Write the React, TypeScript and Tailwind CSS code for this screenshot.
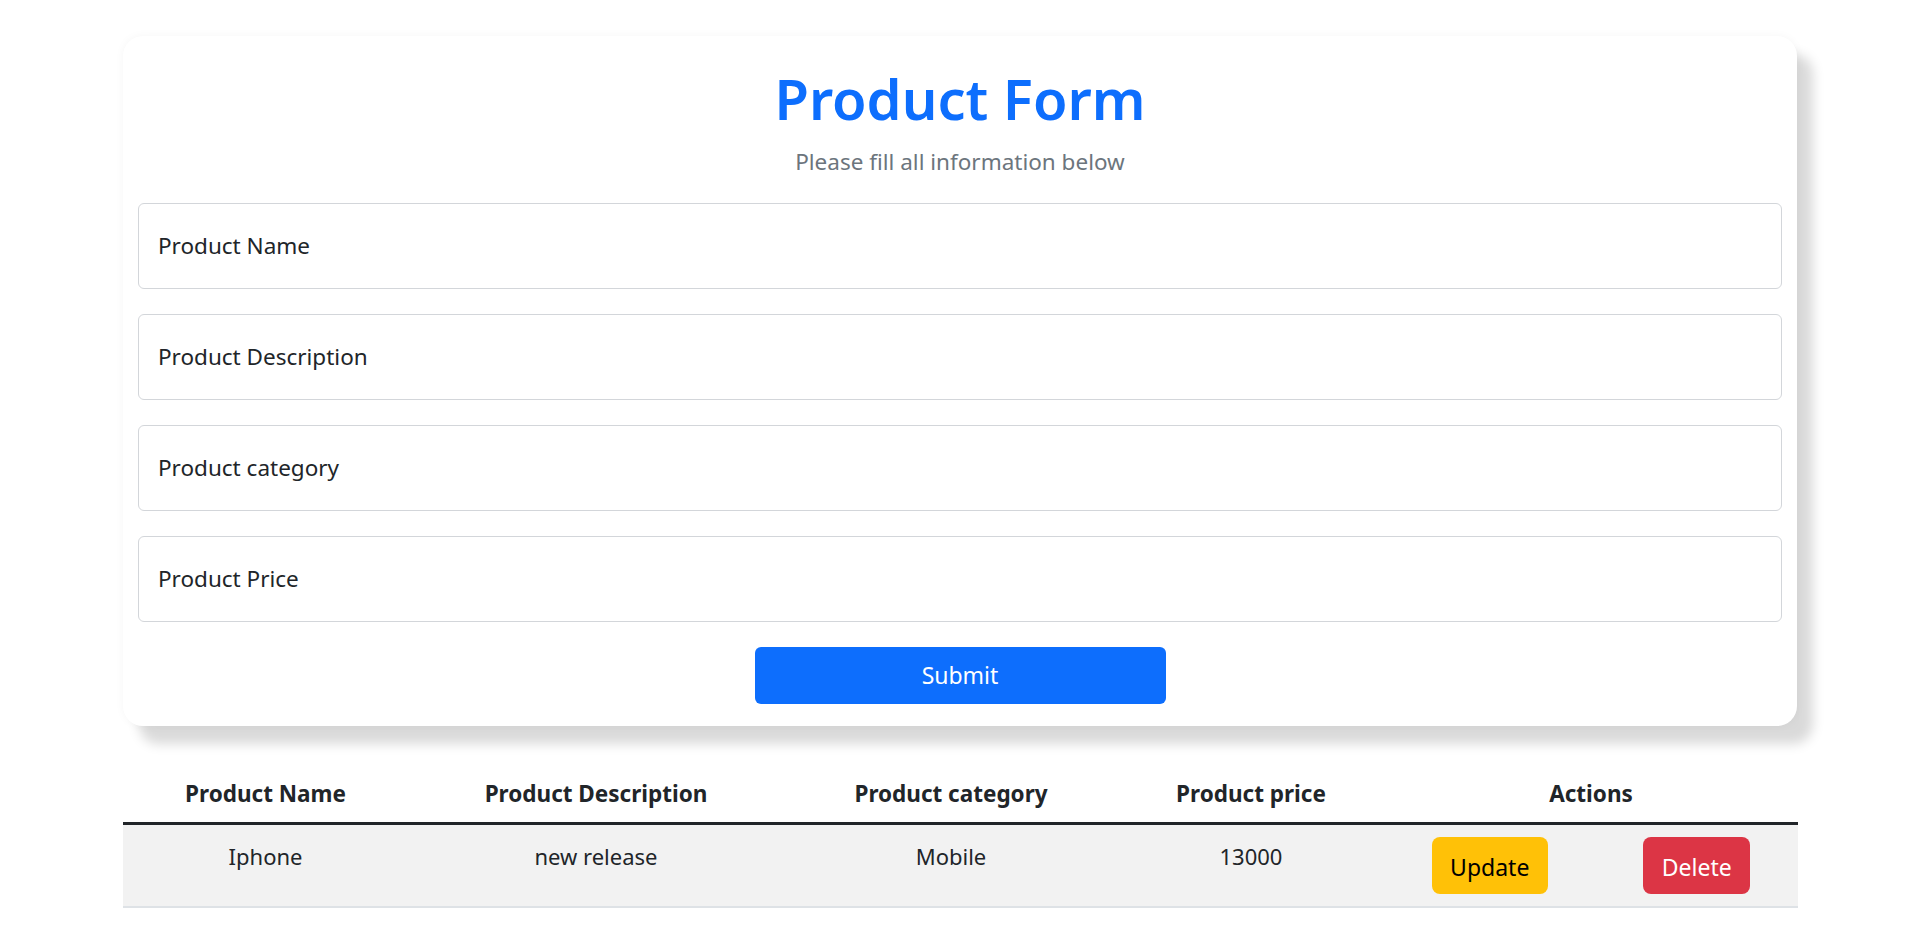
import React from "react";

const fields = [
  "Product Name",
  "Product Description",
  "Product category",
  "Product Price",
];

const products = [
  {
    name: "Iphone",
    description: "new release",
    category: "Mobile",
    price: 13000,
  },
];

function App() {
  return (
    <div className="min-h-screen bg-white font-['Noto_Sans','Liberation_Sans',sans-serif] text-[#212529]">
      <div className="mx-auto w-[1674px] pt-[36px]">
        {/* Form card */}
        <form
          onSubmit={(e) => e.preventDefault()}
          className="flex flex-col items-center rounded-[20px] bg-white px-[15px] pt-[24px] pb-[22px] shadow-[16px_18px_12px_rgba(0,0,0,0.15),0_0_10px_rgba(0,0,0,0.04)]"
        >
          <h1 className="text-[56px] leading-[77px] font-semibold text-[#0d6efd]">
            Product Form
          </h1>
          <p className="mt-[10px] text-[22.5px] leading-[30px] text-[#6c757d]">
            Please fill all information below
          </p>
          <div className="mt-[26px] flex w-full flex-col gap-[25px]">
            {fields.map((f) => (
              <input
                key={f}
                type="text"
                placeholder={f}
                className="h-[86px] w-full rounded-[6px] border border-[#d3d6da] bg-white pl-[19px] pb-[2px] text-[22.5px] text-[#212529] outline-none placeholder:text-[#212529]"
              />
            ))}
          </div>
          <button
            type="submit"
            className="mt-[25px] h-[57px] w-[411px] rounded-[6px] bg-[#0d6efd] text-[23px] text-white"
          >
            Submit
          </button>
        </form>

        {/* Products table */}
        <table className="mt-[39px] w-full table-fixed border-collapse text-center">
          <thead>
            <tr className="border-b-[3px] border-[#212529]">
              <th className="w-[285px] pt-[12px] pb-[12px] text-[22.5px] leading-[33px] font-bold">
                Product Name
              </th>
              <th className="w-[376px] pt-[12px] pb-[12px] text-[22.5px] leading-[33px] font-bold">
                Product Description
              </th>
              <th className="w-[334px] pt-[12px] pb-[12px] text-[22.5px] leading-[33px] font-bold">
                Product category
              </th>
              <th className="w-[266px] pt-[12px] pb-[12px] text-[22.5px] leading-[33px] font-bold">
                Product price
              </th>
              <th className="w-[414px] pt-[12px] pb-[12px] text-[22.5px] leading-[33px] font-bold">
                Actions
              </th>
            </tr>
          </thead>
          <tbody>
            {products.map((p) => (
              <tr
                key={p.name}
                className="border-b-2 border-[#dee2e6] bg-[#f2f2f2]"
              >
                <td className="pt-[15px] align-top text-[22px] leading-[33px]">
                  {p.name}
                </td>
                <td className="pt-[15px] align-top text-[22px] leading-[33px]">
                  {p.description}
                </td>
                <td className="pt-[15px] align-top text-[22px] leading-[33px]">
                  {p.category}
                </td>
                <td className="pt-[15px] align-top text-[22px] leading-[33px]">
                  {p.price}
                </td>
                <td className="py-[12px] align-top">
                  <div className="flex justify-around">
                    <button className="h-[57px] w-[116px] rounded-[8px] bg-[#ffc107] pt-[4px] text-[23px] text-black">
                      Update
                    </button>
                    <button className="h-[57px] w-[107px] rounded-[8px] bg-[#dc3545] pt-[4px] text-[23px] text-white">
                      Delete
                    </button>
                  </div>
                </td>
              </tr>
            ))}
          </tbody>
        </table>
      </div>
    </div>
  );
}

export default App;
